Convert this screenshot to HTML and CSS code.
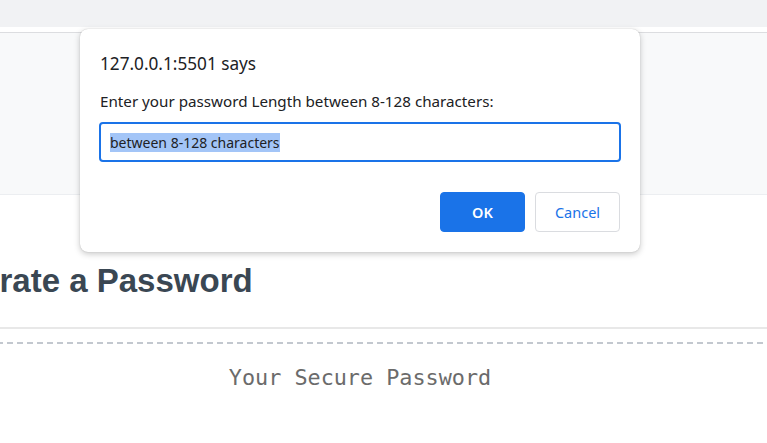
FILE: index.html
```html
<!DOCTYPE html>
<html lang="en">
<head>
<meta charset="utf-8">
<title>Generate a Password</title>
<link rel="stylesheet" href="styles.css">
</head>
<body>
  <div class="topbar"></div>
  <div class="gap"></div>
  <div class="band"></div>
  <main class="page">
    <h1 class="heading">Generate a Password</h1>
    <div class="rule"></div>
    <div class="output">
      <div class="placeholder">Your Secure Password</div>
    </div>
  </main>

  <div class="dialog" role="dialog">
    <div class="dialog-title">127.0.0.1:5501 says</div>
    <div class="dialog-label">Enter your password Length between 8-128 characters:</div>
    <div class="dialog-input"><span class="sel">between 8-128 characters</span></div>
    <div class="dialog-actions">
      <button class="btn btn-ok">OK</button>
      <button class="btn btn-cancel">Cancel</button>
    </div>
  </div>
</body>
</html>
```
FILE: styles.css
```css
html, body {
  margin: 0;
  padding: 0;
  background: #ffffff;
  overflow: hidden;
  width: 767px;
  height: 443px;
}
body {
  position: relative;
  font-family: "Noto Sans", "Open Sans", sans-serif;
}
.topbar {
  height: 27px;
  background: #f1f2f4;
}
.gap {
  height: 5px;
  background: #ffffff;
  border-bottom: 1px solid #dcdde0;
}
.band {
  height: 161px;
  background: #f8f9fa;
  border-bottom: 1px solid #eceef1;
}
.page {
  margin-left: -83px;
  width: 886px;
}
.heading {
  margin: 66px 0 0 0;
  font-family: "Liberation Sans", Arial, sans-serif;
  font-weight: bold;
  font-size: 33px;
  line-height: 40px;
  color: #3a4753;
}
.rule {
  margin-top: 26px;
  height: 2px;
  background: #e8e8e8;
}
.output {
  margin-top: 13px;
  height: 100px;
  background-image: repeating-linear-gradient(90deg, #c3c8cf 0 6px, transparent 6px 10px);
  background-size: 100% 2px;
  background-repeat: no-repeat;
  padding-top: 23px;
  text-align: center;
}
.placeholder {
  font-family: "DejaVu Sans Mono", "Liberation Mono", monospace;
  font-size: 21.8px;
  line-height: 26px;
  color: #6b6b6b;
}
.dialog {
  position: absolute;
  left: 80px;
  top: 29px;
  width: 560px;
  box-sizing: border-box;
  padding: 0 20px 20px 19px;
  background: #ffffff;
  border-radius: 8px;
  box-shadow: 0 2px 6px rgba(0, 0, 0, 0.22), 0 0 1px rgba(0, 0, 0, 0.25);
}
.dialog-title {
  margin-top: 24px;
  padding-left: 1px;
  font-size: 17.2px;
  line-height: 22px;
  color: #202124;
}
.dialog-label {
  margin-top: 16px;
  padding-left: 1px;
  font-size: 15.2px;
  line-height: 20px;
  color: #202124;
}
.dialog-input {
  margin-top: 11px;
  width: 522px;
  height: 40px;
  box-sizing: border-box;
  border: 2px solid #1a73e8;
  border-radius: 4px;
  padding: 0 9px;
  display: flex;
  align-items: center;
  font-size: 14px;
  color: #202124;
}
.sel {
  background: #a3c5f7;
  line-height: 19px;
}
.dialog-actions {
  margin-top: 30px;
  display: flex;
  justify-content: flex-end;
  gap: 10px;
}
.btn {
  width: 85px;
  height: 40px;
  border-radius: 4px;
  font-family: "Noto Sans", "Open Sans", sans-serif;
  font-size: 14.5px;
  cursor: pointer;
}
.btn-ok {
  background: #1a73e8;
  border: 1px solid #1a73e8;
  color: #ffffff;
  font-weight: 600;
}
.btn-cancel {
  background: #ffffff;
  border: 1px solid #dadce0;
  color: #1a73e8;
}
```
